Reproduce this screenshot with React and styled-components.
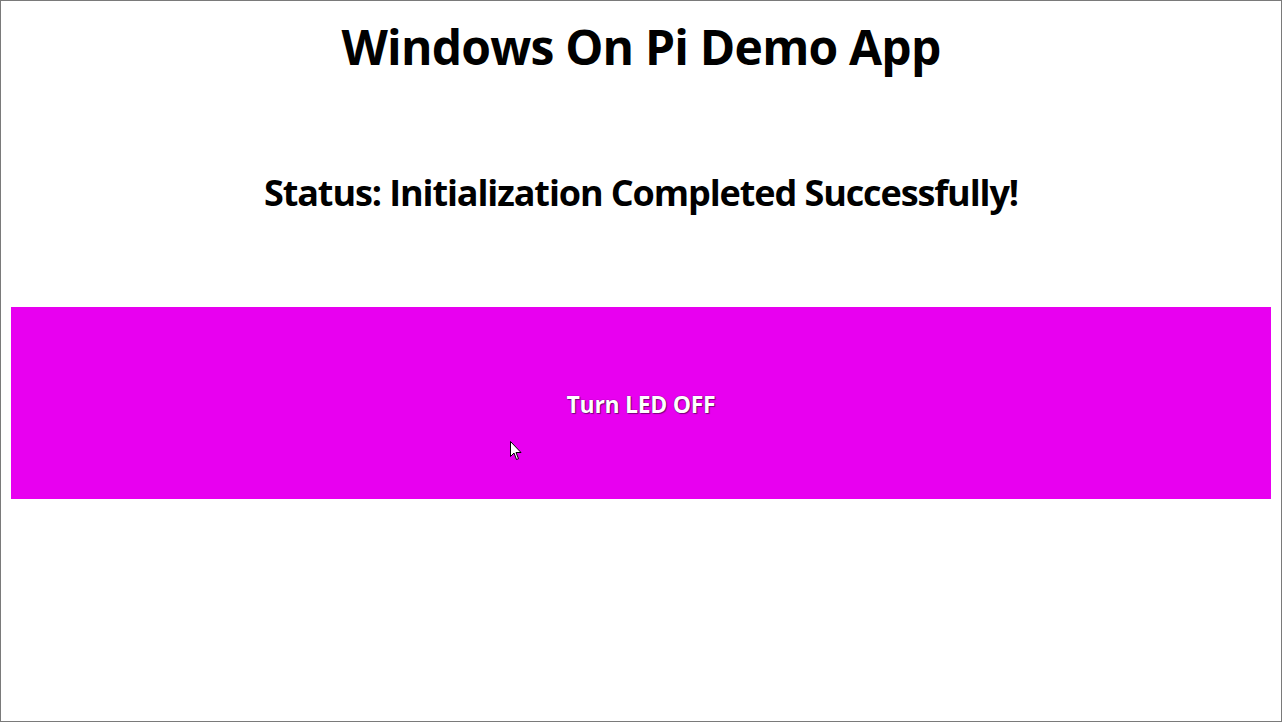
import React from "react";
import styled, { createGlobalStyle } from "styled-components";

const Global = createGlobalStyle`
  html, body { margin: 0; padding: 0; background: #ffffff; }
  body { font-family: "Open Sans", "Noto Sans", sans-serif; }
`;

const Window = styled.div`
  position: relative;
  box-sizing: border-box;
  width: 1282px;
  height: 722px;
  border: 1px solid #7a7a7a;
  background: #ffffff;
  display: flex;
  flex-direction: column;
  align-items: stretch;
  overflow: hidden;
`;

const Title = styled.h1`
  margin: 14px 0 0;
  font-family: "Open Sans", sans-serif;
  font-weight: 700;
  font-size: 48px;
  line-height: 64px;
  letter-spacing: -0.8px;
  text-align: center;
  color: #000000;
`;

const Status = styled.h2`
  margin: 90px 0 0;
  font-family: "Open Sans", sans-serif;
  font-weight: 700;
  font-size: 36px;
  line-height: 48px;
  letter-spacing: -1.1px;
  text-align: center;
  color: #000000;
`;

const LedButton = styled.button`
  margin: 90px 10px 0;
  height: 192px;
  border: none;
  background: #e800f0;
  color: #ffffff;
  font-family: "Open Sans", sans-serif;
  font-weight: 700;
  font-size: 23px;
  letter-spacing: -0.3px;
  text-shadow: 0 0 1px #3a003c, 1px 1px 1px rgba(60, 0, 60, 0.6);
  cursor: default;
  padding: 2px 0 0;
`;

const Cursor = styled.svg`
  position: absolute;
  left: 509px;
  top: 440px;
  width: 13px;
  height: 20px;
  pointer-events: none;
`;

export default function App() {
  return (
    <>
      <Global />
      <Window>
        <Title>Windows On Pi Demo App</Title>
        <Status>Status: Initialization Completed Successfully!</Status>
        <LedButton>Turn LED OFF</LedButton>
        <Cursor viewBox="0 0 13 20">
          <path d="M0.5 0.5 L0.5 15.5 L4 12 L6.5 18.5 L8.5 17.7 L6 11.5 L11 11.5 Z" fill="#ffffff" stroke="#000000" strokeWidth="1" strokeLinejoin="miter" />
        </Cursor>
      </Window>
    </>
  );
}
